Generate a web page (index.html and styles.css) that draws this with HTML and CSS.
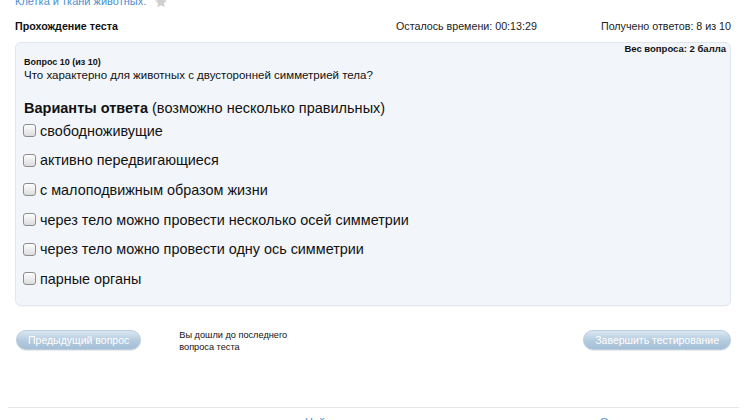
FILE: index.html
```html
<!DOCTYPE html>
<html lang="ru">
<head>
<meta charset="utf-8">
<title>Прохождение теста</title>
<link rel="stylesheet" href="styles.css">
</head>
<body>
<div class="page">
  <div class="crumb">
    <a class="crumb-link" href="#">Клетка и ткани животных.</a>
    <svg class="star" width="14" height="14" viewBox="0 0 24 24"><path d="M12 2l3 6.5 7 .8-5.2 4.8 1.4 7L12 17.6 5.8 21.1l1.4-7L2 9.3l7-.8z" fill="#cfcfcf"/></svg>
  </div>
  <div class="header">
    <div class="title">Прохождение теста</div>
    <div class="timer">Осталось времени: 00:13:29</div>
    <div class="count">Получено ответов: 8 из 10</div>
  </div>
  <div class="panel">
    <div class="weight">Вес вопроса: 2 балла</div>
    <div class="qnum">Вопрос 10 (из 10)</div>
    <div class="qtext">Что характерно для животных с двусторонней симметрией тела?</div>
    <div class="variants"><b>Варианты ответа</b> (возможно несколько правильных)</div>
    <label class="opt"><span class="cb"></span>свободноживущие</label>
    <label class="opt"><span class="cb"></span>активно передвигающиеся</label>
    <label class="opt"><span class="cb"></span>с малоподвижным образом жизни</label>
    <label class="opt"><span class="cb"></span>через тело можно провести несколько осей симметрии</label>
    <label class="opt"><span class="cb"></span>через тело можно провести одну ось симметрии</label>
    <label class="opt"><span class="cb"></span>парные органы</label>
  </div>
  <div class="nav">
    <button class="btn btn-prev">Предыдущий вопрос</button>
    <div class="note">Вы дошли до последнего<br>вопроса теста</div>
    <button class="btn btn-finish">Завершить тестирование</button>
  </div>
</div>
<div class="footer">
  <a href="#" class="flink f1">Найти</a>
  <a href="#" class="flink f2">О проекте</a>
</div>
</body>
</html>
```
FILE: styles.css
```css
html, body {
  margin: 0;
  padding: 0;
  background: #fff;
  font-family: "Liberation Sans", Arial, sans-serif;
  color: #111;
  overflow: hidden;
  height: 420px;
}
.page {
  padding: 0 16px 0 15px;
}
.crumb {
  display: flex;
  align-items: center;
  gap: 8px;
  height: 14px;
  margin-top: -6px;
  font-size: 11px;
}
.crumb-link {
  color: #4a8fcf;
  text-decoration: none;
}
.star { margin-top: 1px; }
.header {
  display: grid;
  grid-template-columns: 381px 1fr auto;
  margin-top: 11px;
  font-size: 10.7px;
  line-height: 14px;
  color: #222;
}
.title { font-weight: bold; color: #111; }
.panel {
  margin-top: 9px;
  border: 1px solid #dfe6ee;
  border-radius: 6px;
  background: #f2f6fb;
  padding: 0 8px 11px 8px;
  box-shadow: 0 1px 1px rgba(0,0,0,0.04);
}
.weight {
  text-align: right;
  font-size: 9.5px;
  font-weight: bold;
  line-height: 11px;
  padding-top: 0;
  margin-right: -4px;
}
.qnum {
  margin-top: 2px;
  font-size: 9px;
  font-weight: bold;
  line-height: 13px;
}
.qtext {
  font-size: 11.5px;
  line-height: 13px;
}
.variants {
  margin-top: 18px;
  font-size: 14.5px;
  line-height: 16px;
}
.opt {
  display: flex;
  align-items: center;
  gap: 4px;
  font-size: 14.4px;
  height: 29.6px;
  margin-left: -1px;
}
.cb {
  display: inline-block;
  width: 11px;
  height: 11px;
  border: 1px solid #8d8d8d;
  border-radius: 3px;
  background: linear-gradient(#fdfdfd, #dcdcdc);
  box-shadow: inset 0 1px 1px rgba(255,255,255,0.8);
}
.nav {
  display: flex;
  align-items: flex-start;
  margin-top: 24px;
  padding-left: 1px;
}
.btn {
  font-family: "Liberation Sans", Arial, sans-serif;
  font-size: 10.5px;
  color: #fff;
  height: 20px;
  padding: 0 11px;
  border: 1px solid #b9cde0;
  border-radius: 10px;
  background: linear-gradient(#dbe7f2, #b3cade 55%, #a4bfd6);
  box-shadow: 0 1px 1px rgba(0,0,0,0.08);
}
.note {
  margin-left: 38px;
  font-size: 9.2px;
  line-height: 12px;
  margin-top: -1px;
  flex: 1;
}
.footer {
  margin: 54px 8px 0 8px;
  border-top: 1px solid #e6e6e6;
  height: 30px;
  position: relative;
  font-size: 11px;
}
.flink {
  color: #4a8fcf;
  text-decoration: none;
  position: absolute;
  top: 8px;
}
.f1 { left: 297px; }
.f2 { left: 592px; }
```
